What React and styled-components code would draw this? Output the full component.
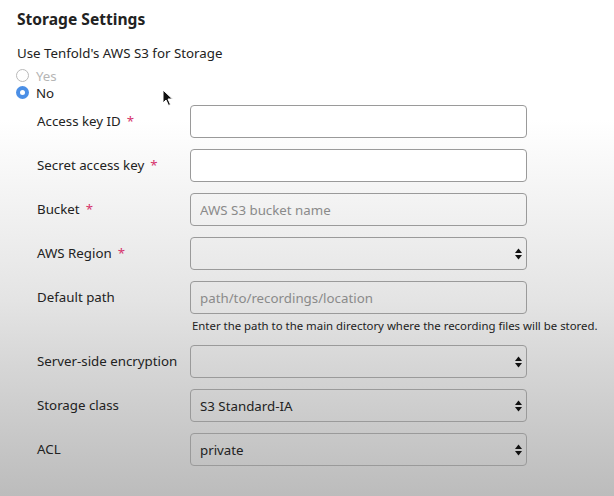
import React from "react";
import styled, { createGlobalStyle } from "styled-components";

const Global = createGlobalStyle`
  html, body { margin: 0; padding: 0; }
  body {
    width: 614px;
    height: 496px;
    overflow: hidden;
    font-family: "Noto Sans", "Open Sans", "DejaVu Sans", sans-serif;
    color: #222;
    background: linear-gradient(to bottom, #ffffff 0px, #ffffff 120px, #e4e4e4 300px, #cfcfcf 400px, #bcbcbc 496px);
  }
`;

const Page = styled.div`
  position: relative;
  width: 614px;
  height: 496px;
  box-sizing: border-box;
  padding: 8px 0 0 17px;
`;

const Title = styled.h2`
  margin: 0;
  font-size: 15.6px;
  line-height: 22px;
  font-weight: 700;
  color: #222;
`;

const Question = styled.div`
  margin-top: 14px;
  font-size: 13.3px;
  line-height: 18px;
  color: #222;
`;

const RadioGroup = styled.div`
  display: flex;
  flex-direction: column;
  margin-top: 5px;
`;

const RadioRow = styled.label`
  display: flex;
  align-items: center;
  gap: 7px;
  height: 17px;
  font-size: 13.3px;
  color: ${(p) => (p.$muted ? "#b5b5b5" : "#222")};
`;

const RadioDot = styled.span`
  box-sizing: border-box;
  width: 13px;
  height: 13px;
  border-radius: 50%;
  margin-left: -1px;
  border: ${(p) => (p.$checked ? "none" : "1px solid #b9b9b9")};
  background: ${(p) => (p.$checked ? "#4b8fe6" : "#fff")};
  display: flex;
  align-items: center;
  justify-content: center;
  &::after {
    content: "";
    width: 5px;
    height: 5px;
    border-radius: 50%;
    background: ${(p) => (p.$checked ? "#fff" : "transparent")};
  }
`;

const Form = styled.div`
  display: grid;
  grid-template-columns: 153px 337px auto;
  row-gap: 11px;
  margin-top: 4px;
  margin-left: 20px;
  align-items: start;
`;

const Label = styled.div`
  grid-column: 1;
  font-size: 13.3px;
  line-height: 33px;
  color: #222;
  white-space: nowrap;
`;

const Required = styled.span`
  color: #d6336c;
  margin-left: 6px;
`;

const Cell = styled.div`
  grid-column: 2 / span 2;
  position: relative;
`;

const TextInput = styled.input`
  box-sizing: border-box;
  width: 337px;
  height: 33px;
  border: 1px solid #9a9a9a;
  border-radius: 4px;
  background: ${(p) => (p.$white ? "#ffffff" : "transparent")};
  padding: 0 9px;
  font-family: inherit;
  font-size: 13.3px;
  color: #222;
  outline: none;
  &::placeholder { color: #8a8a8a; }
`;

const SelectBox = styled.div`
  position: relative;
  width: 337px;
  height: 33px;
`;

const Select = styled.select`
  appearance: none;
  -webkit-appearance: none;
  box-sizing: border-box;
  width: 100%;
  height: 100%;
  border: 1px solid #9a9a9a;
  border-radius: 4px;
  background: transparent;
  padding: 0 9px;
  font-family: inherit;
  font-size: 13.3px;
  color: #222;
  outline: none;
`;

const Arrows = styled.svg`
  position: absolute;
  right: 4px;
  top: 11px;
  pointer-events: none;
`;

const Help = styled.div`
  margin-top: 4px;
  margin-left: 2px;
  font-size: 11.4px;
  line-height: 16px;
  color: #222;
  white-space: nowrap;
`;

const Cursor = styled.svg`
  position: absolute;
  left: 162px;
  top: 89px;
`;

function SelectField({ value, options }) {
  return (
    <SelectBox>
      <Select defaultValue={value}>
        {options.map((o) => (
          <option key={o} value={o}>{o}</option>
        ))}
      </Select>
      <Arrows width="9" height="12" viewBox="0 0 9 12">
        <path d="M4.5 0.5 L8 5 L1 5 Z" fill="#111" />
        <path d="M4.5 11.5 L8 7 L1 7 Z" fill="#111" />
      </Arrows>
    </SelectBox>
  );
}

export default function App() {
  return (
    <>
      <Global />
      <Page>
        <Title>Storage Settings</Title>
        <Question>Use Tenfold's AWS S3 for Storage</Question>
        <RadioGroup>
          <RadioRow $muted>
            <RadioDot />
            Yes
          </RadioRow>
          <RadioRow>
            <RadioDot $checked />
            No
          </RadioRow>
        </RadioGroup>
        <Form>
          <Label>Access key ID<Required>*</Required></Label>
          <Cell><TextInput $white /></Cell>

          <Label>Secret access key<Required>*</Required></Label>
          <Cell><TextInput $white type="password" /></Cell>

          <Label>Bucket<Required>*</Required></Label>
          <Cell><TextInput placeholder="AWS S3 bucket name" /></Cell>

          <Label>AWS Region<Required>*</Required></Label>
          <Cell><SelectField value="" options={[""]} /></Cell>

          <Label>Default path</Label>
          <Cell>
            <TextInput placeholder="path/to/recordings/location" />
            <Help>Enter the path to the main directory where the recording files will be stored.</Help>
          </Cell>

          <Label>Server-side encryption</Label>
          <Cell><SelectField value="" options={[""]} /></Cell>

          <Label>Storage class</Label>
          <Cell><SelectField value="S3 Standard-IA" options={["S3 Standard", "S3 Standard-IA"]} /></Cell>

          <Label>ACL</Label>
          <Cell><SelectField value="private" options={["private", "public-read"]} /></Cell>
        </Form>
        <Cursor width="12" height="18" viewBox="0 0 12 18">
          <path d="M1 1 L1 14 L4 11 L6.5 16.5 L8.5 15.5 L6 10 L10.5 10 Z" fill="#111" stroke="#fff" strokeWidth="1" strokeLinejoin="round" />
        </Cursor>
      </Page>
    </>
  );
}
